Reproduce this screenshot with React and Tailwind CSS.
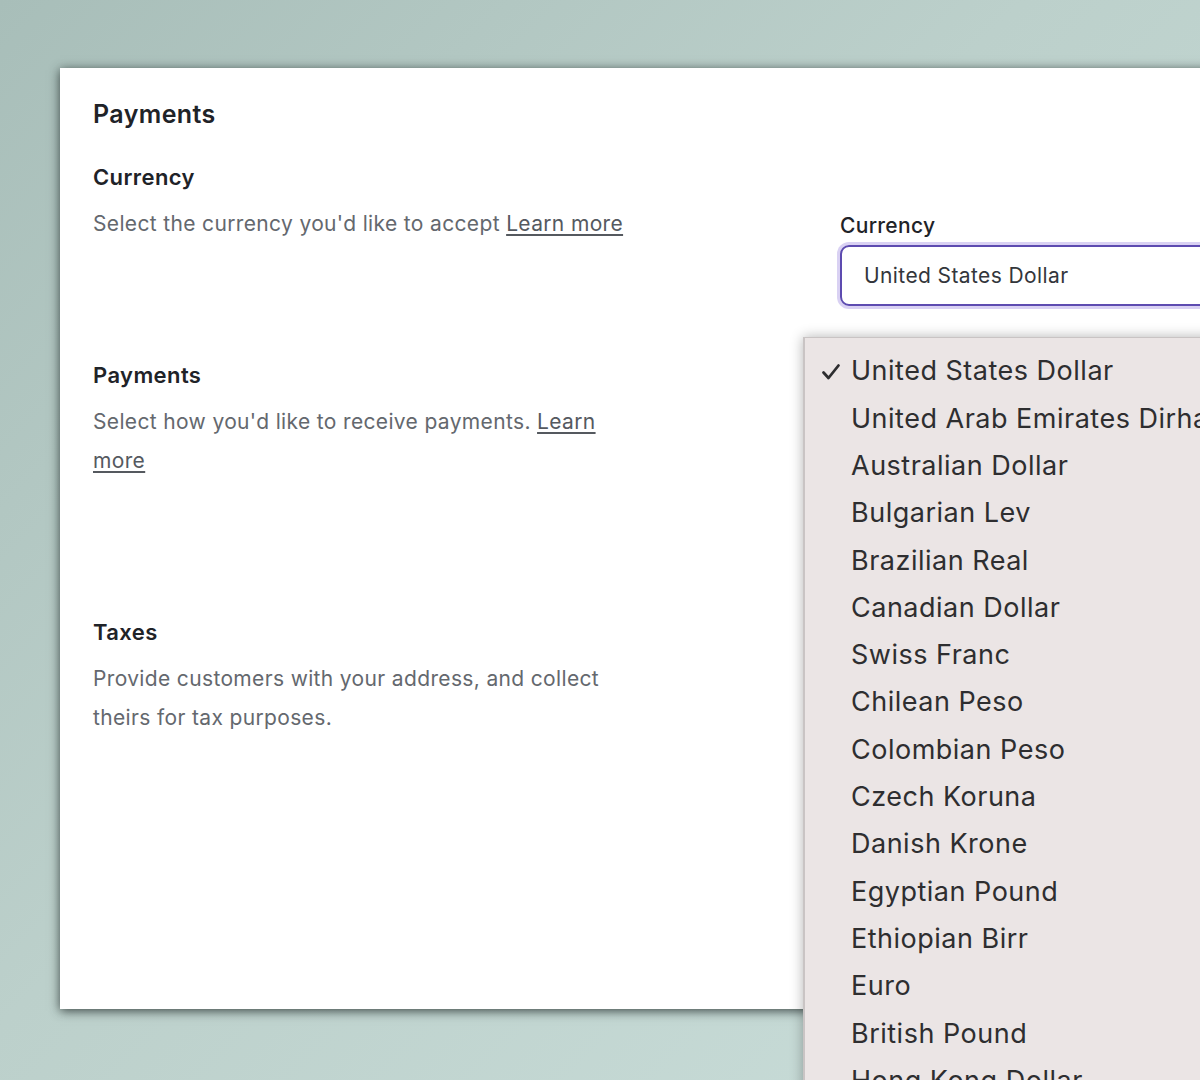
import React from "react";

const currencies = [
  "United States Dollar",
  "United Arab Emirates Dirham",
  "Australian Dollar",
  "Bulgarian Lev",
  "Brazilian Real",
  "Canadian Dollar",
  "Swiss Franc",
  "Chilean Peso",
  "Colombian Peso",
  "Czech Koruna",
  "Danish Krone",
  "Egyptian Pound",
  "Ethiopian Birr",
  "Euro",
  "British Pound",
  "Hong Kong Dollar",
  "Hungarian Forint",
];

function Section({ title, children, right, height }) {
  return (
    <div className="flex" style={{ height }}>
      <div className="w-[536px] shrink-0">
        <h3 className="text-[22px] leading-[28px] font-semibold tracking-[0.4px] text-[#1f2328]">{title}</h3>
        <p className="mt-[13px] text-[21px] leading-[39px] tracking-[0.35px] text-[#64686e]">{children}</p>
      </div>
      {right}
    </div>
  );
}

export default function App() {
  return (
    <div
      className="relative w-[1200px] h-[1080px] overflow-hidden bg-[linear-gradient(135deg,#a8beb9_0%,#bcd0cb_45%,#cadeda_100%)]"
      style={{ fontFamily: "Inter, 'Noto Sans', sans-serif" }}
    >
      <div className="ml-[60px] mt-[68px] w-[1200px] h-[941px] bg-white shadow-[0_2px_10px_rgba(35,45,43,0.85)] pl-[33px] pt-[30px]">
        <h2 className="text-[25px] leading-[32px] font-semibold tracking-[0.4px] text-[#1f2328]">Payments</h2>
        <div className="mt-[33px]">
          <Section
            title="Currency"
            height="198px"
            right={
              <div className="ml-[211px] mt-[49px] w-[400px]">
                <div className="text-[21px] leading-[28px] font-medium tracking-[0.3px] text-[#1f2328]">Currency</div>
                <div className="mt-[5px] h-[61px] rounded-[9px] border-2 border-[#5d4bb0] ring-[3px] ring-[#d9d1f3] flex items-center pl-[22px] text-[21px] tracking-[0.4px] text-[#33363b]">
                  United States Dollar
                </div>
              </div>
            }
          >
            Select the currency you'd like to accept{" "}
            <a className="underline underline-offset-[3px] text-[#55595f]">Learn more</a>
          </Section>
          <Section title="Payments" height="257px">
            Select how you'd like to receive payments.{" "}
            <a className="underline underline-offset-[3px] text-[#55595f]">Learn more</a>
          </Section>
          <Section title="Taxes" height="200px">
            Provide customers with your address, and collect theirs for tax purposes.
          </Section>
        </div>
      </div>

      <div className="absolute left-[803px] top-[337px] w-[420px] h-[800px] bg-[#ebe5e5] border-l-2 border-t border-[#c9c4c4] shadow-[0_0_12px_rgba(0,0,0,0.3)] pt-[10px]">
        {currencies.map((c, i) => (
          <div key={c} className="relative h-[47.3px] flex items-center pl-[46px] text-[27px] text-[#2e2e30] whitespace-nowrap tracking-[0.5px]">
            {i === 0 && (
              <svg className="absolute left-[16px] top-[14px]" width="20" height="20" viewBox="0 0 20 20" fill="none">
                <path d="M2.5 10.5 L7.5 16 L17.5 3.5" stroke="#2e2e30" strokeWidth="2.8" strokeLinecap="round" strokeLinejoin="round" />
              </svg>
            )}
            {c}
          </div>
        ))}
      </div>
    </div>
  );
}
